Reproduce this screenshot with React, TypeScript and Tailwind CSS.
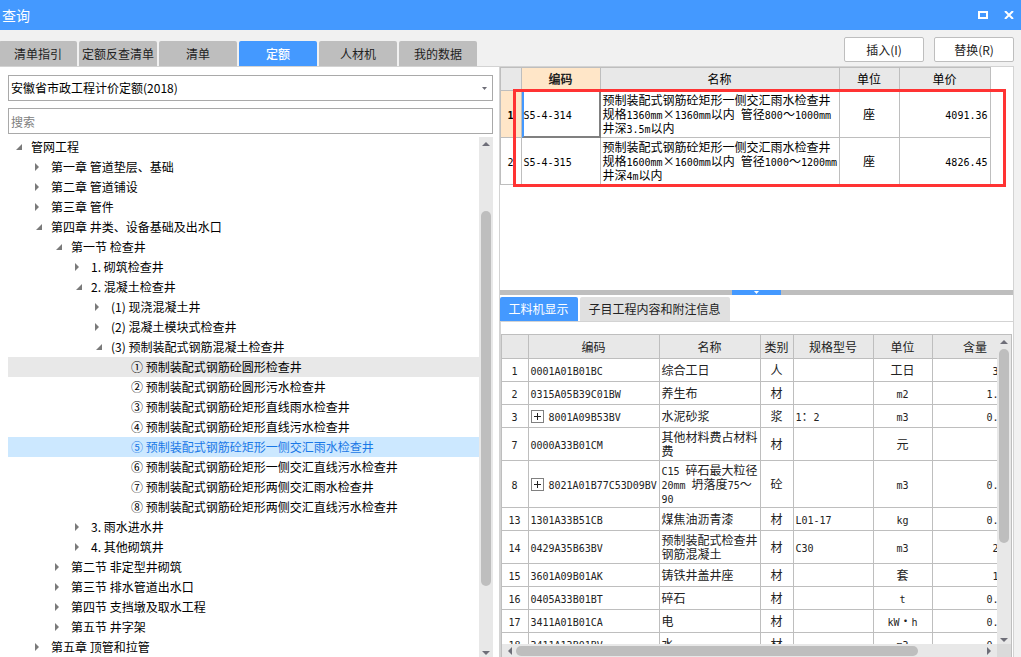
import { useState } from 'react';
import clsx from 'clsx';

type TreeItem = {
  level: number;
  label: string;
  state?: 'open' | 'closed';
};

const tabs = ['清单指引', '定额反查清单', '清单', '定额', '人材机', '我的数据'];

const treeItems: TreeItem[] = [
  { level: 0, label: '管网工程', state: 'open' },
  { level: 1, label: '第一章 管道垫层、基础', state: 'closed' },
  { level: 1, label: '第二章 管道铺设', state: 'closed' },
  { level: 1, label: '第三章 管件', state: 'closed' },
  { level: 1, label: '第四章 井类、设备基础及出水口', state: 'open' },
  { level: 2, label: '第一节 检查井', state: 'open' },
  { level: 3, label: '1. 砌筑检查井', state: 'closed' },
  { level: 3, label: '2. 混凝土检查井', state: 'open' },
  { level: 4, label: '(1) 现浇混凝土井', state: 'closed' },
  { level: 4, label: '(2) 混凝土模块式检查井', state: 'closed' },
  { level: 4, label: '(3) 预制装配式钢筋混凝土检查井', state: 'open' },
  { level: 5, label: '① 预制装配式钢筋砼圆形检查井' },
  { level: 5, label: '② 预制装配式钢筋砼圆形污水检查井' },
  { level: 5, label: '③ 预制装配式钢筋砼矩形直线雨水检查井' },
  { level: 5, label: '④ 预制装配式钢筋砼矩形直线污水检查井' },
  { level: 5, label: '⑤ 预制装配式钢筋砼矩形一侧交汇雨水检查井' },
  { level: 5, label: '⑥ 预制装配式钢筋砼矩形一侧交汇直线污水检查井' },
  { level: 5, label: '⑦ 预制装配式钢筋砼矩形两侧交汇雨水检查井' },
  { level: 5, label: '⑧ 预制装配式钢筋砼矩形两侧交汇直线污水检查井' },
  { level: 3, label: '3. 雨水进水井', state: 'closed' },
  { level: 3, label: '4. 其他砌筑井', state: 'closed' },
  { level: 2, label: '第二节 非定型井砌筑', state: 'closed' },
  { level: 2, label: '第三节 排水管道出水口', state: 'closed' },
  { level: 2, label: '第四节 支挡墩及取水工程', state: 'closed' },
  { level: 2, label: '第五节 井字架', state: 'closed' },
  { level: 1, label: '第五章 顶管和拉管', state: 'closed' },
];

const quotas = [
  {
    code: 'S5-4-314',
    name: '预制装配式钢筋砼矩形一侧交汇雨水检查井\n规格1360mm×1360mm以内 管径800～1000mm\n井深3.5m以内',
    unit: '座',
    price: '4091.36',
  },
  {
    code: 'S5-4-315',
    name: '预制装配式钢筋砼矩形一侧交汇雨水检查井\n规格1600mm×1600mm以内 管径1000～1200mm\n井深4m以内',
    unit: '座',
    price: '4826.45',
  },
];

const materials = [
  { no: 1, code: '0001A01B01BC', name: '综合工日', type: '人', spec: '', unit: '工日', qty: '3' },
  { no: 2, code: '0315A05B39C01BW', name: '养生布', type: '材', spec: '', unit: 'm2', qty: '1.' },
  { no: 3, code: '8001A09B53BV', name: '水泥砂浆', type: '浆', spec: '1：2', unit: 'm3', qty: '0.', group: true },
  { no: 7, code: '0000A33B01CM', name: '其他材料费占材料\n费', type: '材', spec: '', unit: '元', qty: '' },
  { no: 8, code: '8021A01B77C53D09BV', name: 'C15 碎石最大粒径\n20mm 坍落度75～\n90', type: '砼', spec: '', unit: 'm3', qty: '0.', group: true },
  { no: 13, code: '1301A33B51CB', name: '煤焦油沥青漆', type: '材', spec: 'L01-17', unit: 'kg', qty: '0.' },
  { no: 14, code: '0429A35B63BV', name: '预制装配式检查井\n钢筋混凝土', type: '材', spec: 'C30', unit: 'm3', qty: '2' },
  { no: 15, code: '3601A09B01AK', name: '铸铁井盖井座', type: '材', spec: '', unit: '套', qty: '1' },
  { no: 16, code: '0405A33B01BT', name: '碎石', type: '材', spec: '', unit: 't', qty: '0.' },
  { no: 17, code: '3411A01B01CA', name: '电', type: '材', spec: '', unit: 'kW·h', qty: '0.' },
  { no: 18, code: '3411A13B01BV', name: '水', type: '材', spec: '', unit: 'm3', qty: '0.' },
];

// Latin runs take half the width of a Chinese character, symbols take the full width
function CellText({ text }: { text: string }) {
  return (
    <>
      {text.split('\n').map((line, n) => (
        <span key={n} className="block h-3.5 whitespace-pre">
          {line.split(/([\x20-\x7e]+|[×·])/).map((part, i) => {
            if (part === '×' || part === '·') {
              return <span key={i} className="inline-block w-3 text-center leading-none">{part}</span>;
            }
            if (i % 2 === 1) {
              return <span key={i} className="font-['DejaVu_Sans_Mono',monospace] text-[10px] leading-none">{part}</span>;
            }
            return part;
          })}
        </span>
      ))}
    </>
  );
}

function Arrow({ dir }: { dir: 'up' | 'down' | 'left' | 'right' }) {
  const points = {
    up: '0,6 4,2 8,6',
    down: '0,2 4,6 8,2',
    left: '6,0 2,4 6,8',
    right: '2,0 6,4 2,8',
  };
  return (
    <svg width="8" height="8" viewBox="0 0 8 8" className="shrink-0" aria-hidden="true">
      <polygon points={points[dir]} fill="#6e6e78" />
    </svg>
  );
}

function VScroll({ start, size }: { start: number; size: number }) {
  return (
    <div className="flex w-3.5 shrink-0 flex-col items-center bg-[#e8e8e8] pt-[3px]">
      <Arrow dir="up" />
      <div className="min-h-0 w-2.5 flex-1">
        <div style={{ height: `${start}%` }} />
        <div className="rounded-full bg-[#bebebe]" style={{ height: `${size}%` }} />
      </div>
      <Arrow dir="down" />
    </div>
  );
}

function TreeMark({ state }: { state?: 'open' | 'closed' }) {
  return (
    <svg width="8" height="8" viewBox="0 0 8 8" className="mr-2 shrink-0" aria-hidden="true">
      {state === 'open' && <polygon points="7,1 7,7 1,7" fill="#7a7a7a" />}
      {state === 'closed' && <polygon points="0,0 4,4 0,8" fill="#7a7a7a" />}
    </svg>
  );
}

export default function App() {
  const [activeTab, setActiveTab] = useState('定额');
  const [selected, setSelected] = useState(15);
  const [detailTab, setDetailTab] = useState(0);

  return (
    <div className="flex h-screen flex-col overflow-hidden bg-[#f1f1f1] font-['Noto_Sans_CJK_SC',sans-serif] text-xs text-black">
      {/* Title bar */}
      <header className="flex h-[30px] shrink-0 items-center bg-[#4499ff] pr-[7px] pl-0.5 text-white">
        <h1 className="flex-1 text-sm">查询</h1>
        <button type="button" aria-label="最大化" className="mr-4">
          <svg width="10" height="8" viewBox="0 0 10 8">
            <rect x="1" y="1" width="8" height="6" fill="none" stroke="white" strokeWidth="2" />
          </svg>
        </button>
        <button type="button" aria-label="关闭">
          <svg width="10" height="8" viewBox="0 0 10 8">
            <path d="M1 0L9 8M9 0L1 8" stroke="white" strokeWidth="2" />
          </svg>
        </button>
      </header>

      {/* Tabs and actions */}
      <div className="flex h-9 shrink-0 items-end pr-[7px]">
        <nav className="-ml-px flex flex-1 gap-0.5">
          {tabs.map((tab) => (
            <button
              key={tab}
              type="button"
              onClick={() => setActiveTab(tab)}
              className={clsx(
                'h-[25px] w-[78px] rounded-t-xs whitespace-nowrap',
                tab === activeTab ? 'bg-[#4499ff] font-medium text-white' : 'bg-[#bebebe] text-[#222222]'
              )}
            >
              {tab}
            </button>
          ))}
        </nav>
        <div className="flex gap-2.5 pb-1">
          <button type="button" className="h-[25px] w-20 rounded-xs border border-[#bebebe] bg-white text-[#222222]">插入(I)</button>
          <button type="button" className="h-[25px] w-20 rounded-xs border border-[#bebebe] bg-white text-[#222222]">替换(R)</button>
        </div>
      </div>

      <main className="mr-[7px] grid min-h-0 flex-1 grid-cols-[499fr_515fr] border-t border-r border-[#d3d3d3] bg-white">
        {/* Left: quota book and chapter tree */}
        <section className="flex min-h-0 flex-col pt-2 pr-1.5 pl-2">
          <div className="relative mb-[7px]">
            <select
              aria-label="定额库"
              className="block h-[26px] w-full appearance-none border border-[#a9a9a9] bg-white pl-0.5 outline-none"
            >
              <option>安徽省市政工程计价定额(2018)</option>
            </select>
            <svg width="5" height="3" viewBox="0 0 5 3" className="pointer-events-none absolute top-3 right-1.5">
              <polygon points="0,0 5,0 2.5,3" fill="#6e6e78" />
            </svg>
          </div>
          <input
            type="text"
            aria-label="搜索"
            placeholder="搜索"
            className="mb-[3px] h-[26px] w-full shrink-0 border border-[#a9a9a9] bg-white pl-0.5 outline-none placeholder:text-[#808080]"
          />
          <div className="flex min-h-0 flex-1">
            <ul className="min-w-0 flex-1 overflow-hidden">
              {treeItems.map((item, index) => (
                <li key={item.label}>
                  <button
                    type="button"
                    onClick={() => setSelected(index)}
                    style={{ paddingLeft: item.level * 20 + 7 }}
                    className={clsx(
                      'flex h-5 w-full items-center whitespace-nowrap',
                      index === selected && 'bg-[#cce8ff] text-[#1a78e6]',
                      index === 11 && index !== selected && 'bg-[#e8e8e8]'
                    )}
                  >
                    <TreeMark state={item.state} />
                    {item.label}
                  </button>
                </li>
              ))}
            </ul>
            <VScroll start={12.5} size={75} />
          </div>
        </section>

        {/* Right: quota list and material detail */}
        <section className="flex min-h-0 min-w-0 flex-col border-l border-[#d3d3d3]">
          <div className="relative h-[223px] shrink-0 overflow-hidden">
            <table className="w-[491px] table-fixed border-separate border-spacing-0 border-t border-l border-[#bebebe] leading-[14px]">
              <colgroup>
                <col className="w-[21px]" />
                <col className="w-[79px]" />
                <col className="w-[239px]" />
                <col className="w-[60px]" />
                <col className="w-[91px]" />
              </colgroup>
              <thead>
                <tr className="h-[23px] bg-[#e8e8e8]">
                  <th className="border-r border-b border-[#bebebe] p-0" />
                  <th className="border-r border-b border-[#bebebe] bg-[#ffe6c8] p-0 font-bold text-[#222222]">编码</th>
                  <th className="border-r border-b border-[#bebebe] p-0 font-normal">名称</th>
                  <th className="border-r border-b border-[#bebebe] p-0 font-normal">单位</th>
                  <th className="border-r border-b border-[#bebebe] p-0 font-normal">单价</th>
                </tr>
              </thead>
              <tbody>
                {quotas.map((row, i) => (
                  <tr key={row.code} className="h-[47px]">
                    <td className={clsx('border-r border-b border-[#bebebe] p-0 text-center', i === 0 && 'bg-[#ffe6c8] font-bold')}>
                      <CellText text={String(i + 1)} />
                    </td>
                    <td
                      className={clsx(
                        'py-0 pr-0',
                        i === 0
                          ? 'border-r-2 border-b-2 border-l-2 border-r-[#808080] border-b-[#808080] border-l-[#4499ff] pl-0'
                          : 'border-r border-b border-[#bebebe] pl-0.5'
                      )}
                    >
                      <CellText text={row.code} />
                    </td>
                    <td className="border-r border-b border-[#bebebe] py-0 pr-0 pl-0.5">
                      <CellText text={row.name} />
                    </td>
                    <td className="border-r border-b border-[#bebebe] p-0 text-center">{row.unit}</td>
                    <td className="border-r border-b border-[#bebebe] py-0 pr-0.5 pl-0 text-right">
                      <CellText text={row.price} />
                    </td>
                  </tr>
                ))}
              </tbody>
            </table>
            {/* Highlight frame over both results */}
            <div className="pointer-events-none absolute top-[22px] right-[7px] left-[13px] h-[98px] border-3 border-[#ff3333]" />
          </div>

          {/* Splitter */}
          <div className="flex h-[5px] shrink-0 justify-center bg-[#bebebe]">
            <button type="button" aria-label="收起" className="flex w-[49px] items-center justify-center bg-[#4499ff]">
              <svg width="5" height="3" viewBox="0 0 5 3">
                <polygon points="0,0 5,0 2.5,3" fill="white" />
              </svg>
            </button>
          </div>

          <div className="flex shrink-0 gap-0.5 border-b border-[#d3d3d3] pt-0.5">
            {['工料机显示', '子目工程内容和附注信息'].map((label, i) => (
              <button
                key={label}
                type="button"
                onClick={() => setDetailTab(i)}
                className={clsx(
                  'h-6 rounded-t-xs px-[9px]',
                  i === detailTab ? 'bg-[#4499ff] text-white' : 'bg-[#e0e0e0] text-[#222222]'
                )}
              >
                {label}
              </button>
            ))}
          </div>

          <div className="mr-px flex min-h-0 flex-1 flex-col border-l border-[#d3d3d3] pt-3">
            <div className="flex min-h-0 flex-1 border-t border-r border-l border-[#bebebe]">
              <div className="min-w-0 flex-1 overflow-hidden">
                <table className="w-[517px] table-fixed border-separate border-spacing-0 leading-[14px] text-[#222222]">
                  <colgroup>
                    <col className="w-[27px]" />
                    <col className="w-[131px]" />
                    <col className="w-[101px]" />
                    <col className="w-[33px]" />
                    <col className="w-[80px]" />
                    <col className="w-[59px]" />
                    <col className="w-[86px]" />
                  </colgroup>
                  <thead>
                    <tr className="h-6 bg-[#e8e8e8]">
                      {['', '编码', '名称', '类别', '规格型号', '单位', '含量'].map((title) => (
                        <th key={title} className="border-r border-b border-[#bebebe] p-0 font-normal">{title}</th>
                      ))}
                    </tr>
                  </thead>
                  <tbody>
                    {materials.map((row) => (
                      <tr key={row.no} className="h-[23px]">
                        <td className="border-r border-b border-[#bebebe] p-0 text-center">
                          <CellText text={String(row.no)} />
                        </td>
                        <td className="border-r border-b border-[#bebebe] py-0 pr-0 pl-0.5">
                          <div className="flex items-center gap-[5px]">
                            {row.group && (
                              <button type="button" aria-label="展开" className="bg-white">
                                <svg width="13" height="13" viewBox="0 0 13 13">
                                  <rect x="0.5" y="0.5" width="12" height="12" fill="none" stroke="#808080" />
                                  <path d="M3 6.5h7M6.5 3v7" stroke="#222222" />
                                </svg>
                              </button>
                            )}
                            <div><CellText text={row.code} /></div>
                          </div>
                        </td>
                        <td className="border-r border-b border-[#bebebe] py-0.5 pr-0 pl-0.5">
                          <CellText text={row.name} />
                        </td>
                        <td className="border-r border-b border-[#bebebe] p-0 text-center">{row.type}</td>
                        <td className="border-r border-b border-[#bebebe] py-0 pr-0 pl-0.5">
                          <CellText text={row.spec} />
                        </td>
                        <td className="border-r border-b border-[#bebebe] p-0 text-center">
                          <CellText text={row.unit} />
                        </td>
                        <td className="border-r border-b border-[#bebebe] py-0 pr-[19px] pl-0 text-right">
                          <CellText text={row.qty} />
                        </td>
                      </tr>
                    ))}
                  </tbody>
                </table>
              </div>
              <VScroll start={1} size={67} />
            </div>
            <div className="flex h-[13px] shrink-0 border-r border-l border-[#bebebe]">
              <div className="flex min-w-0 flex-1 items-center bg-[#e8e8e8] px-1">
                <Arrow dir="left" />
                <div className="h-2.5 min-w-0 flex-1 px-0.5">
                  <div className="h-full w-[86%] rounded-full bg-[#bebebe]" />
                </div>
                <Arrow dir="right" />
              </div>
              <div className="w-3.5 bg-[#dadada]" />
            </div>
          </div>
        </section>
      </main>
    </div>
  );
}
